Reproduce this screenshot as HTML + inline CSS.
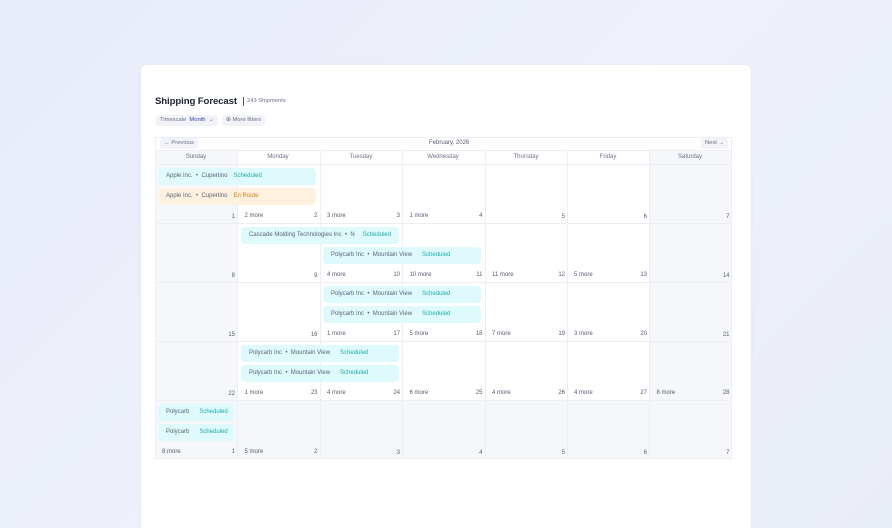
<!DOCTYPE html>
<html><head><style>
*{margin:0;padding:0;box-sizing:border-box}
html,body{width:892px;height:528px;overflow:hidden}
body{background:linear-gradient(135deg,#e8ecf9,#eef1fb 50%,#e9edf8);font-family:"Liberation Sans",sans-serif;position:relative;color:#555c70}
.card{position:absolute;left:141px;top:65px;width:610px;height:463px;background:#fff;border-radius:6px 6px 0 0;box-shadow:0 1px 3px rgba(60,70,120,.06)}
.a{position:absolute}
.t{font-size:9.6px;font-weight:bold;color:#1d2233;left:155px;top:96px;letter-spacing:-0.1px}
.sub{font-size:5.8px;color:#6b7185;top:98px}
.pill{font-size:5.8px;background:#f1f3f8;border-radius:3px;height:11px;line-height:11px;padding:0 4px;color:#6b7185}
.grid{left:155px;top:137px;width:577px;height:322px;border:1px solid #eceef3}
.vl{position:absolute;width:1px;background:#eceef3;top:150px;height:309px}
.hl{position:absolute;height:1px;background:#eceef3;left:155px;width:577px}
.wk{position:absolute;background:#f6f7fb}
.dn{position:absolute;font-size:6px;color:#6b7185;text-align:center;top:154px;width:82px}
.num{position:absolute;font-size:6px;color:#555c70}
.ev{position:absolute;height:17px;background:#dffafd;border-radius:4px;font-size:6px;line-height:17px;padding-left:8px;color:#5b6275;white-space:nowrap;overflow:hidden}
.ev b{font-weight:normal;color:#1fa9a8;margin-left:10px}
.ev.o{background:#fff1df}.ev.o b{color:#c9830f}
</style></head><body>
<div class="card"></div>
<div class="a t">Shipping Forecast</div>
<div class="a" style="left:243px;top:97px;width:1px;height:9px;background:#555"></div>
<div class="a sub" style="left:247px">243 Shipments</div>
<div class="a pill" style="left:156px;top:115px">Timescale&nbsp;&nbsp;<span style="color:#3b3fa8">Month</span> &nbsp;⌄</div>
<div class="a pill" style="left:222px;top:115px">⊕ More filters</div>

<div class="a grid"></div>
<div class="wk" style="left:156px;top:150px;width:81px;height:308px"></div>
<div class="wk" style="left:650px;top:150px;width:81px;height:308px"></div>
<div class="wk" style="left:156px;top:400px;width:575px;height:58px"></div>
<div class="a pill" style="left:160px;top:138px">← Previous</div>
<div class="a" style="left:429px;top:140px;font-size:6px;color:#555c70">February, 2026</div>
<div class="a pill" style="left:701px;top:138px">Next →</div>
<div class="hl" style="top:150px"></div>
<div class="hl" style="top:164px"></div>
<div class="hl" style="top:223px"></div>
<div class="hl" style="top:282px"></div>
<div class="hl" style="top:341px"></div>
<div class="hl" style="top:400px"></div>
<div class="vl" style="left:237px"></div><div class="vl" style="left:320px"></div><div class="vl" style="left:402px"></div><div class="vl" style="left:485px"></div><div class="vl" style="left:567px"></div><div class="vl" style="left:649px"></div>
<div class="dn" style="left:155px">Sunday</div><div class="dn" style="left:237px">Monday</div><div class="dn" style="left:320px">Tuesday</div><div class="dn" style="left:402px">Wednesday</div><div class="dn" style="left:485px">Thursday</div><div class="dn" style="left:567px">Friday</div><div class="dn" style="left:649px">Saturday</div>

<div id="n"></div>
<script>
var cols=[155,237.5,320,402.5,485,567,649.5],rows=[164,223,282,341,400];
var d=[[1,2,3,4,5,6,7],[8,9,10,11,12,13,14],[15,16,17,18,19,20,21],[22,23,24,25,26,27,28],[1,2,3,4,5,6,7]];
var m=[["","2 more","3 more","1 more","","",""],["","","4 more","10 more","11 more","5 more",""],["","","1 more","5 more","7 more","3 more",""],["","1 more","4 more","6 more","4 more","4 more","8 more"],["8 more","5 more","","","","",""]];
var h="";
for(var r=0;r<5;r++)for(var c=0;c<7;c++){
h+='<div class="num" style="left:'+(cols[c]+2)+'px;width:78px;text-align:right;top:'+(rows[r]+(m[r][c]?49:50))+'px">'+d[r][c]+'</div>';
if(m[r][c])h+='<div class="num" style="left:'+(cols[c]+7)+'px;top:'+(rows[r]+49)+'px">'+m[r][c]+'</div>';}
document.getElementById("n").innerHTML=h;
</script>
<div class="ev" style="left:158px;top:168px;width:158px">Apple Inc. &nbsp;•&nbsp; Cupertino<b style="margin-left:6px">Scheduled</b></div>
<div class="ev o" style="left:158px;top:188px;width:158px">Apple Inc. &nbsp;•&nbsp; Cupertino<b style="margin-left:6px">En Route</b></div>
<div class="ev" style="left:241px;top:227px;width:158px">Cascade Molding Technologies Inc &nbsp;•&nbsp; N<b style="margin-left:8px">Scheduled</b></div>
<div class="ev" style="left:323px;top:247px;width:158px">Polycarb Inc &nbsp;•&nbsp; Mountain View<b>Scheduled</b></div>
<div class="ev" style="left:323px;top:286px;width:158px">Polycarb Inc &nbsp;•&nbsp; Mountain View<b>Scheduled</b></div>
<div class="ev" style="left:323px;top:306px;width:158px">Polycarb Inc &nbsp;•&nbsp; Mountain View<b>Scheduled</b></div>
<div class="ev" style="left:241px;top:345px;width:158px">Polycarb Inc &nbsp;•&nbsp; Mountain View<b>Scheduled</b></div>
<div class="ev" style="left:241px;top:365px;width:158px">Polycarb Inc &nbsp;•&nbsp; Mountain View<b>Scheduled</b></div>
<div class="ev" style="left:158px;top:404px;width:76px">Polycarb<b>Scheduled</b></div>
<div class="ev" style="left:158px;top:424px;width:76px">Polycarb<b>Scheduled</b></div>
</body></html>
